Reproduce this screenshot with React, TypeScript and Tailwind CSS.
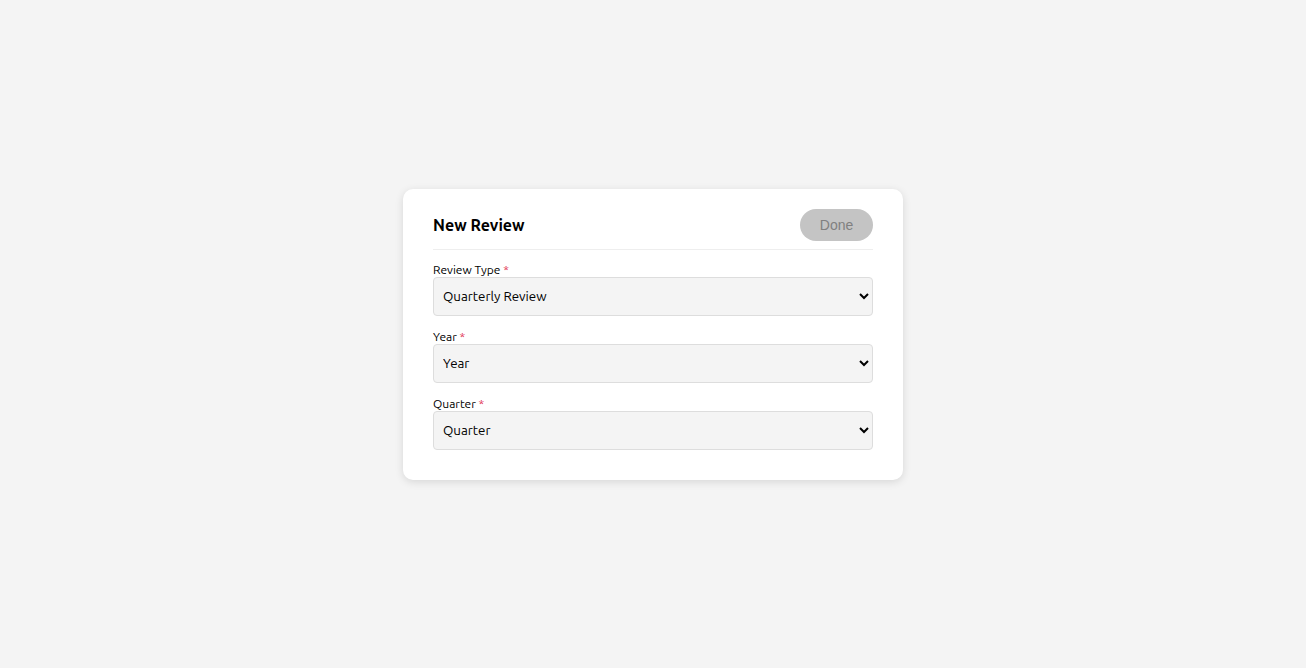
export default function App() {
  return (
    <div className="min-h-screen bg-[#f4f4f4] flex items-center justify-center font-['Ubuntu','Noto_Sans',sans-serif]">
      <div className="w-[500px] bg-white rounded-[10px] shadow-[0_2px_8px_rgba(0,0,0,0.12)] px-[30px] pt-[20px] pb-[30px]">
        <div className="flex items-center justify-between pb-2 border-b border-[#eeeeee]">
          <h2 className="text-[16px] font-bold text-black">New Review</h2>
          <button className="h-[32px] w-[73px] rounded-full bg-[#c4c4c4] text-[#808080] text-[14px] pt-px font-['Liberation_Sans',Arial,sans-serif]">
            Done
          </button>
        </div>

        <div className="flex flex-col gap-[13px] mt-3">
          <Field label="Review Type" value="Quarterly Review" />
          <Field label="Year" value="Year" />
          <Field label="Quarter" value="Quarter" />
        </div>
      </div>
    </div>
  )
}

function Field({ label, value }: { label: string; value: string }) {
  return (
    <label className="flex flex-col">
      <span className="text-[12px] leading-[15px] text-black">
        {label} <span className="text-[#e0294a]">*</span>
      </span>
      <select
        defaultValue={value}
        className="h-[39px] w-full rounded-[4px] border border-[#dddddd] bg-[#f4f4f4] px-[5px] text-[13.33px] text-black"
      >
        <option>{value}</option>
      </select>
    </label>
  )
}
